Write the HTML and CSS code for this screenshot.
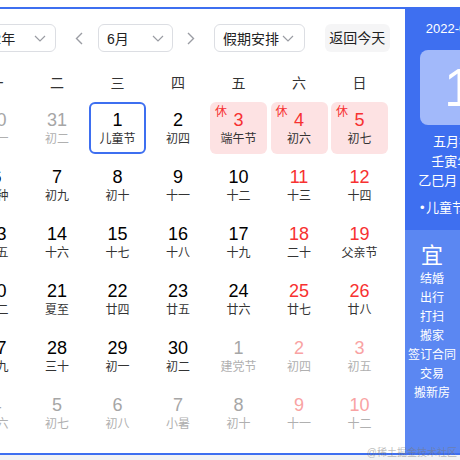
FILE: index.html
```html
<!DOCTYPE html>
<html lang="zh-CN">
<head>
<meta charset="utf-8">
<title>日历</title>
<link rel="stylesheet" href="styles.css">
</head>
<body>
<div class="widget">
  <div class="main">
    <div class="controls">
      <div class="sel year"><span>2022年</span><svg class="chev" width="12" height="7" viewBox="0 0 12 7"><path d="M1 1l5 5 5-5"/></svg></div>
      <div class="arrow prev"><svg width="8" height="13" viewBox="0 0 8 13"><path d="M7 1L1.5 6.5 7 12"/></svg></div>
      <div class="sel month"><span>6月</span><svg class="chev" width="12" height="7" viewBox="0 0 12 7"><path d="M1 1l5 5 5-5"/></svg></div>
      <div class="arrow next"><svg width="8" height="13" viewBox="0 0 8 13"><path d="M1 1l5.5 5.5L1 12"/></svg></div>
      <div class="sel hol"><span>假期安排</span><svg class="chev" width="12" height="7" viewBox="0 0 12 7"><path d="M1 1l5 5 5-5"/></svg></div>
      <div class="today-btn">返回今天</div>
    </div>
    <div class="week">
      <span>一</span><span>二</span><span>三</span><span>四</span><span>五</span><span>六</span><span>日</span>
    </div>
    <div class="grid">
      <div class="cell other"><span class="num">30</span><span class="lunar">初一</span></div>
      <div class="cell other"><span class="num">31</span><span class="lunar">初二</span></div>
      <div class="cell today"><span class="num">1</span><span class="lunar">儿童节</span></div>
      <div class="cell"><span class="num">2</span><span class="lunar">初四</span></div>
      <div class="cell holiday"><span class="rest">休</span><span class="num">3</span><span class="lunar">端午节</span></div>
      <div class="cell holiday"><span class="rest">休</span><span class="num">4</span><span class="lunar">初六</span></div>
      <div class="cell holiday"><span class="rest">休</span><span class="num">5</span><span class="lunar">初七</span></div>

      <div class="cell"><span class="num">6</span><span class="lunar">芒种</span></div>
      <div class="cell"><span class="num">7</span><span class="lunar">初九</span></div>
      <div class="cell"><span class="num">8</span><span class="lunar">初十</span></div>
      <div class="cell"><span class="num">9</span><span class="lunar">十一</span></div>
      <div class="cell"><span class="num">10</span><span class="lunar">十二</span></div>
      <div class="cell weekend"><span class="num">11</span><span class="lunar">十三</span></div>
      <div class="cell weekend"><span class="num">12</span><span class="lunar">十四</span></div>

      <div class="cell"><span class="num">13</span><span class="lunar">十五</span></div>
      <div class="cell"><span class="num">14</span><span class="lunar">十六</span></div>
      <div class="cell"><span class="num">15</span><span class="lunar">十七</span></div>
      <div class="cell"><span class="num">16</span><span class="lunar">十八</span></div>
      <div class="cell"><span class="num">17</span><span class="lunar">十九</span></div>
      <div class="cell weekend"><span class="num">18</span><span class="lunar">二十</span></div>
      <div class="cell weekend"><span class="num">19</span><span class="lunar">父亲节</span></div>

      <div class="cell"><span class="num">20</span><span class="lunar">廿二</span></div>
      <div class="cell"><span class="num">21</span><span class="lunar">夏至</span></div>
      <div class="cell"><span class="num">22</span><span class="lunar">廿四</span></div>
      <div class="cell"><span class="num">23</span><span class="lunar">廿五</span></div>
      <div class="cell"><span class="num">24</span><span class="lunar">廿六</span></div>
      <div class="cell weekend"><span class="num">25</span><span class="lunar">廿七</span></div>
      <div class="cell weekend"><span class="num">26</span><span class="lunar">廿八</span></div>

      <div class="cell"><span class="num">27</span><span class="lunar">廿九</span></div>
      <div class="cell"><span class="num">28</span><span class="lunar">三十</span></div>
      <div class="cell"><span class="num">29</span><span class="lunar">初一</span></div>
      <div class="cell"><span class="num">30</span><span class="lunar">初二</span></div>
      <div class="cell other"><span class="num">1</span><span class="lunar">建党节</span></div>
      <div class="cell other weekend"><span class="num">2</span><span class="lunar">初四</span></div>
      <div class="cell other weekend"><span class="num">3</span><span class="lunar">初五</span></div>

      <div class="cell other"><span class="num">4</span><span class="lunar">初六</span></div>
      <div class="cell other"><span class="num">5</span><span class="lunar">初七</span></div>
      <div class="cell other"><span class="num">6</span><span class="lunar">初八</span></div>
      <div class="cell other"><span class="num">7</span><span class="lunar">小暑</span></div>
      <div class="cell other"><span class="num">8</span><span class="lunar">初十</span></div>
      <div class="cell other weekend"><span class="num">9</span><span class="lunar">十一</span></div>
      <div class="cell other weekend"><span class="num">10</span><span class="lunar">十二</span></div>
    </div>
  </div>
  <div class="side">
    <div class="side-top">
      <div class="date">2022-06-01</div>
      <div class="daybox">1</div>
      <div class="lunar-lines">
        <div>五月初三</div>
        <div>壬寅年 虎</div>
        <div>乙巳月 乙酉日</div>
      </div>
      <div class="fest"><span class="dot">•</span>儿童节</div>
    </div>
    <div class="side-bottom">
      <div class="col">
        <div class="yi">宜</div>
        <div class="item">结婚</div>
        <div class="item">出行</div>
        <div class="item">打扫</div>
        <div class="item">搬家</div>
        <div class="item">签订合同</div>
        <div class="item">交易</div>
        <div class="item">搬新房</div>
      </div>
      <div class="col">
        <div class="yi">忌</div>
        <div class="item">动土</div>
        <div class="item">破土</div>
        <div class="item">安葬</div>
      </div>
    </div>
  </div>
</div>
<div class="below"></div>
<div class="wm">@稀土掘金技术社区</div>
</body>
</html>
```
FILE: styles.css
```css
html, body {
  margin: 0;
  padding: 0;
  overflow: hidden;
}
body {
  width: 460px;
  height: 460px;
  background: #fff;
  position: relative;
  font-family: "Liberation Sans", "Noto Sans CJK SC", sans-serif;
}
.widget {
  display: flex;
  width: max-content;
  margin: 7px 0 0 -58px;
  border: 2px solid #3e6ff0;
}
.main {
  width: 461px;
  box-sizing: border-box;
  padding: 15px 15.25px 14px 16px;
}
.controls {
  display: flex;
  align-items: center;
  height: 28px;
}
.sel {
  box-sizing: border-box;
  height: 28px;
  border: 1px solid #dcdee3;
  border-radius: 6px;
  display: flex;
  align-items: center;
  justify-content: space-between;
  font-size: 14px;
  color: #222;
}
.sel.year { width: 96px; padding: 0 9px; }
.sel.month { width: 75px; padding: 0 8px; }
.sel.hol { width: 91px; padding: 0 10px 0 8px; }
.chev path, .arrow path {
  fill: none;
  stroke: #9a9ca3;
  stroke-width: 1.2;
}
.arrow {
  width: 24px;
  display: flex;
  justify-content: center;
}
.arrow path { stroke-width: 1.4; }
.arrow.prev { margin: 0 7px 0 11px; }
.arrow.next { margin: 0 11px 0 6px; }
.today-btn {
  margin-left: auto;
  width: 65px;
  height: 28px;
  line-height: 28px;
  text-align: center;
  background: #f5f5f6;
  border-radius: 6px;
  font-size: 14px;
  color: #222;
}
.week {
  margin: 21px 0 9px 8px;
  display: grid;
  grid-template-columns: repeat(7, 57px);
  column-gap: 3.5px;
  font-size: 14px;
  line-height: 20px;
  text-align: center;
  color: #333;
}
.grid {
  margin-left: 8px;
  display: grid;
  grid-template-columns: repeat(7, 57px);
  grid-auto-rows: 52px;
  column-gap: 3.5px;
  row-gap: 5px;
}
.cell {
  box-sizing: border-box;
  position: relative;
  border: 2px solid transparent;
  border-radius: 6px;
  display: flex;
  flex-direction: column;
  align-items: center;
  padding-top: 6px;
}
.num {
  font-size: 18px;
  line-height: 20px;
  color: #000;
}
.lunar {
  margin-top: 1px;
  font-size: 12px;
  line-height: 16px;
  color: #333;
  white-space: nowrap;
}
.cell.weekend .num { color: #f73131; }
.cell.other .num { color: #a6a6a6; }
.cell.other .lunar { color: #b0b0b0; }
.cell.other.weekend .num { color: #f9a3a3; }
.cell.today { border-color: #3e6ff0; }
.cell.holiday { background: #fde2e3; }
.cell.holiday .num { color: #f73131; }
.rest {
  position: absolute;
  left: 3px;
  top: 1px;
  font-size: 12px;
  line-height: 14px;
  color: #f73131;
}
.side {
  width: 108px;
  display: flex;
  flex-direction: column;
  color: #fff;
}
.side-top {
  box-sizing: border-box;
  height: 221px;
  padding: 11px 15px 0;
  background: #3e6ff0;
}
.date {
  text-align: center;
  font-size: 13px;
  line-height: 18px;
  white-space: nowrap;
}
.daybox {
  margin-top: 12px;
  height: 75px;
  border-radius: 8px;
  background: #a2b9fa;
  font-size: 54px;
  line-height: 75px;
  text-align: center;
}
.lunar-lines {
  margin: 7px -15px 0;
  text-align: center;
  font-size: 13px;
  line-height: 19.5px;
  white-space: nowrap;
}
.fest {
  margin-top: 7px;
  font-size: 13px;
  line-height: 19.5px;
  white-space: nowrap;
}
.dot { margin-right: 1.5px; }
.side-bottom {
  flex: 1;
  display: flex;
  background: #5b87f2;
}
.col {
  width: 54px;
  padding-top: 13px;
  text-align: center;
}
.yi {
  font-size: 22px;
  line-height: 26px;
  margin-bottom: 1px;
}
.item {
  font-size: 12px;
  line-height: 19px;
  white-space: nowrap;
}
.below {
  height: 10px;
  background: #f1f2f4;
}
.wm {
  position: absolute;
  right: 3px;
  top: 447px;
  font-size: 10px;
  line-height: 12px;
  color: rgba(120, 120, 120, 0.5);
  white-space: nowrap;
}
```
